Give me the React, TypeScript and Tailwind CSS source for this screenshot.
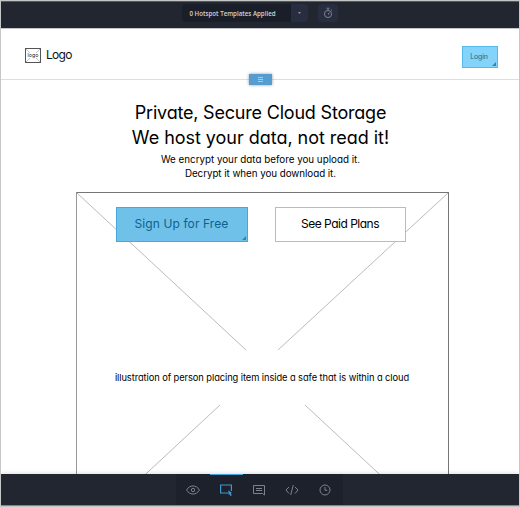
import React from "react";

const hand = "font-['Comic_Sans_MS','Inter',sans-serif] [font-feature-settings:'cv11'] whitespace-nowrap";

function Corner() {
  return (
    <svg className="absolute right-px bottom-px" width="4" height="4" viewBox="0 0 4 4">
      <path d="M4 0V4H0Z" fill="#2589bd" />
    </svg>
  );
}

function TopBar() {
  return (
    <header className="flex h-[27px] shrink-0 items-start justify-center border-t border-[#555a62] bg-[#212631] pt-[2px] pr-px">
      <div className="flex h-[18px] w-[109px] items-center justify-center rounded-l-sm bg-[#1a1e29] pt-px pr-[7px] font-['Open_Sans',sans-serif] text-[6.2px] font-semibold whitespace-nowrap text-[#d0d3d8]">
        0 Hotspot Templates Applied
      </div>
      <div className="flex h-[18px] w-[17px] items-center justify-center rounded-r-sm bg-[#282d3f]">
        <svg width="3" height="2" viewBox="0 0 3 2"><path d="M0 0H3L1.5 2Z" fill="#8b909b" /></svg>
      </div>
      <div className="ml-[10px] flex h-[18px] w-5 items-center justify-center rounded-sm bg-[#282d3f]">
        <svg width="10" height="12" viewBox="0 0 10 12" fill="none" stroke="#858a94" strokeWidth=".9">
          <circle cx="5" cy="7" r="3.6" />
          <path d="M5 3.4V1.3M3.5 1.2H6.5M8 3.6L9 2.7M5 7L6.5 5.6M5 7H6.2" />
        </svg>
      </div>
    </header>
  );
}

function BottomBar() {
  return (
    <footer className="relative flex h-[31px] shrink-0 justify-center bg-[#212631] pr-[2px] shadow-[0_-1px_4px_#0002]">
      <div className="flex w-[167px] justify-center bg-[#1d212c]">
        <div className="flex w-[33px] items-center justify-center">
          <svg width="14" height="10" viewBox="0 0 14 10" fill="none" stroke="#7d828c">
            <path d="M.6 5C3.5-.4 10.5-.4 13.4 5C10.5 10.4 3.5 10.4.6 5Z" />
            <circle cx="7" cy="5" r="1.7" />
          </svg>
        </div>
        <div className="relative flex w-[33px] items-center justify-center">
          <div className="absolute inset-x-0 top-0 h-px bg-[#42a5df]" />
          <svg width="14" height="13" viewBox="0 0 14 13" fill="none" stroke="#4297ce" strokeWidth="1.2">
            <path d="M9 10H1.6V2H12.4V8" />
            <path d="M9.3 7.3L13 10L11.8 10.4L12.8 12.5L11.5 13L10.6 11.2L9.6 12Z" fill="#4297ce" stroke="none" />
          </svg>
        </div>
        <div className="flex w-[33px] items-center justify-center">
          <svg width="12" height="12" viewBox="0 0 12 12" fill="none" stroke="#7d828c">
            <path d="M.5 1.5H11.5V11L9.5 9.5H.5Z" />
            <path d="M3 4.5H9M3 6.5H9" />
          </svg>
        </div>
        <div className="flex w-[33px] items-center justify-center">
          <svg width="14" height="12" viewBox="0 0 14 12" fill="none" stroke="#7d828c">
            <path d="M4 3L1 6L4 9.5M10 3L13 6L10 9.5M8.3 1L5.7 11" />
          </svg>
        </div>
        <div className="flex w-[33px] items-center justify-center">
          <svg width="12" height="12" viewBox="0 0 12 12" fill="none" stroke="#7d828c">
            <circle cx="6" cy="6" r="5" />
            <path d="M6 3V6.3H8.3" />
          </svg>
        </div>
      </div>
    </footer>
  );
}

export default function App() {
  return (
    <div className="flex h-[507px] w-[520px] flex-col overflow-hidden border border-[#c5c7c6] bg-white">
      <TopBar />
      <nav className="relative flex h-[52px] shrink-0 items-center border-t border-b border-t-[#c4c5c9] border-b-[#d2e2ed] pt-[2px] pl-6">
        <svg width="16" height="15" viewBox="0 0 16 15" fill="none">
          <rect x=".5" y=".5" width="15" height="14" stroke="#555" />
          <path d="M1 1L5 5M15 1L11 5M1 14L5 10M15 14L11 10" stroke="#aaa" strokeWidth=".7" />
          <text x="8" y="9" textAnchor="middle" fontSize="5.3" fill="#222" className="font-['Comic_Sans_MS','Inter',sans-serif] [font-feature-settings:'cv11']">logo</text>
        </svg>
        <span className={`${hand} ml-[5px] text-[12px] tracking-[-0.7px] text-[#111]`}>Logo</span>
        <button className={`${hand} relative mt-[4px] mr-[21px] ml-auto flex h-[22px] w-9 items-center justify-center border border-[#58b9e8] bg-[#83d3fb] pr-[2px] text-[7px] tracking-[-0.2px] text-[#216b8d]`}>
          Login
          <Corner />
        </button>
        <div className="absolute -bottom-[6px] left-[248px] flex h-[11px] w-[23px] items-center justify-center bg-[#559dd0] shadow-[0_0_3px_#0006]">
          <svg width="5" height="5" viewBox="0 0 5 5"><path d="M0 .5H5M0 2.5H5M0 4.5H5" stroke="#a5cde8" /></svg>
        </div>
      </nav>
      <main className="flex min-h-0 flex-1 flex-col items-center overflow-hidden pl-px text-black">
        <h1 className={`${hand} mt-[20px] text-center text-[18px] leading-[25px]`}>
          <span className="tracking-[-0.2px]">Private, Secure Cloud Storage</span>
          <br />
          <span className="tracking-[-0.03px]">We host your data, not read it!</span>
        </h1>
        <p className={`${hand} mt-[3px] text-center text-[9.8px] leading-[14px]`}>
          We encrypt your data before you upload it.
          <br />
          <span className="tracking-[-0.05px]">Decrypt it when you download it.</span>
        </p>
        <section className="relative mt-[11px] ml-[3px] h-[345px] w-[373px] shrink-0 border border-[#757575] border-l-[#999]">
          <svg className="absolute inset-0" width="371" height="343" viewBox="0 0 371 343" stroke="#aaa" strokeWidth=".8">
            <path d="M0 0L169 157M371 0L201 157M143 212L0 345M228 212L371 345" />
          </svg>
          <div className="relative flex gap-[27px] pt-[14px] pl-[39px]">
            <button className={`${hand} relative flex h-[35px] w-[132px] items-center justify-center border border-[#45a9dc] bg-[#70c1ea] pb-px text-[12px] tracking-[0.1px] text-[#0d628c]`}>
              Sign Up for Free
              <Corner />
            </button>
            <button className={`${hand} flex h-[35px] w-[131px] items-center justify-center border border-[#bbb] bg-white pb-px text-[12px] tracking-[-0.5px]`}>
              See Paid Plans
            </button>
          </div>
          <p className={`${hand} relative mt-[129px] text-center text-[9.3px] leading-[14px] tracking-[-0.07px]`}>
            illustration of person placing item inside a safe that is within a cloud
          </p>
        </section>
      </main>
      <BottomBar />
      <div className="h-px shrink-0 bg-[#858991]" />
    </div>
  );
}
